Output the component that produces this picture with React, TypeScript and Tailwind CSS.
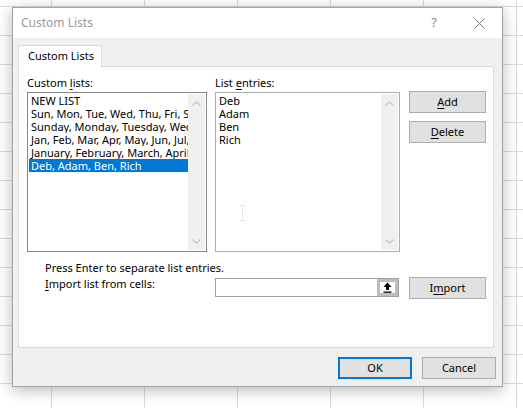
import React from 'react'

const rows1 = [
  'NEW LIST',
  'Sun, Mon, Tue, Wed, Thu, Fri, Sat',
  'Sunday, Monday, Tuesday, Wednesday, Thursday',
  'Jan, Feb, Mar, Apr, May, Jun, Jul, Aug',
  'January, February, March, April, May',
  'Deb, Adam, Ben, Rich',
]

const entries = ['Deb', 'Adam', 'Ben', 'Rich']

function U({ children }: { children: React.ReactNode }) {
  return <span className="underline underline-offset-[2px] decoration-[1px]">{children}</span>
}

// disabled scrollbar strip inside the list boxes
function ScrollStrip() {
  return (
    <div className="w-[17px] mr-[1px] my-[1px] bg-[#f0f0f0] flex flex-col justify-between items-center pt-[7px] pb-[6px]">
      <svg width="9" height="5" viewBox="0 0 9 5">
        <path d="M0.5 4.5 L4.5 0.8 L8.5 4.5" fill="none" stroke="#c4c4c4" strokeWidth="1.2" />
      </svg>
      <svg width="9" height="5" viewBox="0 0 9 5">
        <path d="M0.5 0.5 L4.5 4.2 L8.5 0.5" fill="none" stroke="#c4c4c4" strokeWidth="1.2" />
      </svg>
    </div>
  )
}

function Btn({ children, className = '' }: { children: React.ReactNode; className?: string }) {
  return (
    <div className={`h-[22px] bg-[#e1e1e1] border border-[#adadad] flex items-center justify-center text-black ${className}`}>
      {children}
    </div>
  )
}

export default function App() {
  return (
    <div className="w-[523px] h-[408px] overflow-hidden bg-white bg-[linear-gradient(to_right,#dadada_1px,transparent_1px),linear-gradient(to_bottom,#dadada_1px,transparent_1px)] bg-[size:93px_29px] bg-[position:51px_6px] pt-[7px] pl-[12px] font-['Noto_Sans',sans-serif] text-[11px] text-black">
      {/* dialog window */}
      <div className="w-[491px] h-[380px] border border-[#a3a3a3] bg-[#f0f0f0] shadow-[0_3px_14px_rgba(0,0,0,0.28)] flex flex-col">
        {/* title bar */}
        <div className="h-[30px] bg-white flex items-center">
          <div className="flex-1 pl-[8px] text-[12px] text-[#9a9a9a]">Custom Lists</div>
          <div className="w-[46px] flex justify-center text-[13px] text-[#8c8c8c]">?</div>
          <div className="w-[45px] flex justify-center">
            <svg width="11" height="11" viewBox="0 0 11 11">
              <path d="M0.5 0.5 L10.5 10.5 M10.5 0.5 L0.5 10.5" stroke="#7a7a7a" strokeWidth="1" />
            </svg>
          </div>
        </div>

        {/* body */}
        <div className="flex-1 pt-[7px] pl-[5px] flex flex-col">
          {/* tab */}
          <div className="w-[84px] h-[22px] -mb-[1px] relative z-10 bg-white border border-b-0 border-[#d9d9d9] pl-[9px] flex items-center">
            Custom Lists
          </div>

          {/* tab panel */}
          <div className="w-[476px] h-[282px] bg-white border border-[#d9d9d9] pt-[8px] pl-[8px]">
            <div className="flex items-start">
              <div className="w-[180px]">
                <div className="h-[16px] leading-[16px] mb-[1px]">
                  Custom <U>l</U>ists:
                </div>
                <div className="h-[160px] border border-[#828790] bg-white flex">
                  <div className="flex-1 pl-[1px] pt-[1px] overflow-hidden">
                    {rows1.map((r, i) => (
                      <div
                        key={r}
                        className={`h-[13px] leading-[13px] pl-[2px] whitespace-nowrap overflow-hidden ${i === 5 ? 'bg-[#0078d7] text-white' : ''}`}
                      >
                        {r}
                      </div>
                    ))}
                  </div>
                  <ScrollStrip />
                </div>
              </div>

              <div className="w-[185px] ml-[8px]">
                <div className="h-[16px] leading-[16px] mb-[1px]">
                  List <U>e</U>ntries:
                </div>
                <div className="h-[160px] border border-[#abadb3] bg-white flex">
                  <div className="flex-1 pl-[3px] pt-[1px] flex flex-col">
                    {entries.map(e => (
                      <div key={e} className="h-[13px] leading-[13px]">{e}</div>
                    ))}
                    <div className="pl-[20px] mt-[59px]">
                      <svg className="block" width="7" height="16" viewBox="0 0 7 16">
                        <path d="M0.5 0.5 H6.5 M3.5 0.5 V15.5 M0.5 15.5 H6.5" stroke="#e6e6e6" strokeWidth="1" fill="none" />
                      </svg>
                    </div>
                  </div>
                  <ScrollStrip />
                </div>
              </div>

              <div className="w-[77px] ml-[9px] pt-[16px] flex flex-col gap-[8px]">
                <Btn><U>A</U>dd</Btn>
                <Btn><U>D</U>elete</Btn>
              </div>
            </div>

            <div className="mt-[8px] pl-[18px] h-[16px] leading-[16px]">Press Enter to separate list entries.</div>

            <div className="flex items-start pl-[18px]">
              <div className="w-[170px] h-[16px] leading-[16px]">
                <U>I</U>mport list from cells:
              </div>
              <div className="w-[184px] h-[19px] mt-[2px] border border-[#a0a0a0] bg-white flex justify-end">
                <div className="w-[21px] h-full border-[3px] border-[#bdbdbd] bg-white flex items-center justify-center">
                  <svg width="9" height="11" viewBox="0 0 9 11">
                    <path d="M4.5 0.5 L8.5 5 H6 V8 H3 V5 H0.5 Z" fill="#000" />
                    <rect x="0.5" y="9.5" width="8" height="1.3" fill="#000" />
                  </svg>
                </div>
              </div>
              <Btn className="w-[77px] ml-[10px] mt-[1px]">
                I<U>m</U>port
              </Btn>
            </div>
          </div>

          {/* footer buttons */}
          <div className="flex justify-end gap-[10px] pt-[9px] pr-[6px]">
            <div className="w-[74px] h-[22px] bg-[#e1e1e1] border-2 border-[#0078d7] flex items-center justify-center">OK</div>
            <Btn className="w-[74px]">Cancel</Btn>
          </div>
        </div>
      </div>
    </div>
  )
}
